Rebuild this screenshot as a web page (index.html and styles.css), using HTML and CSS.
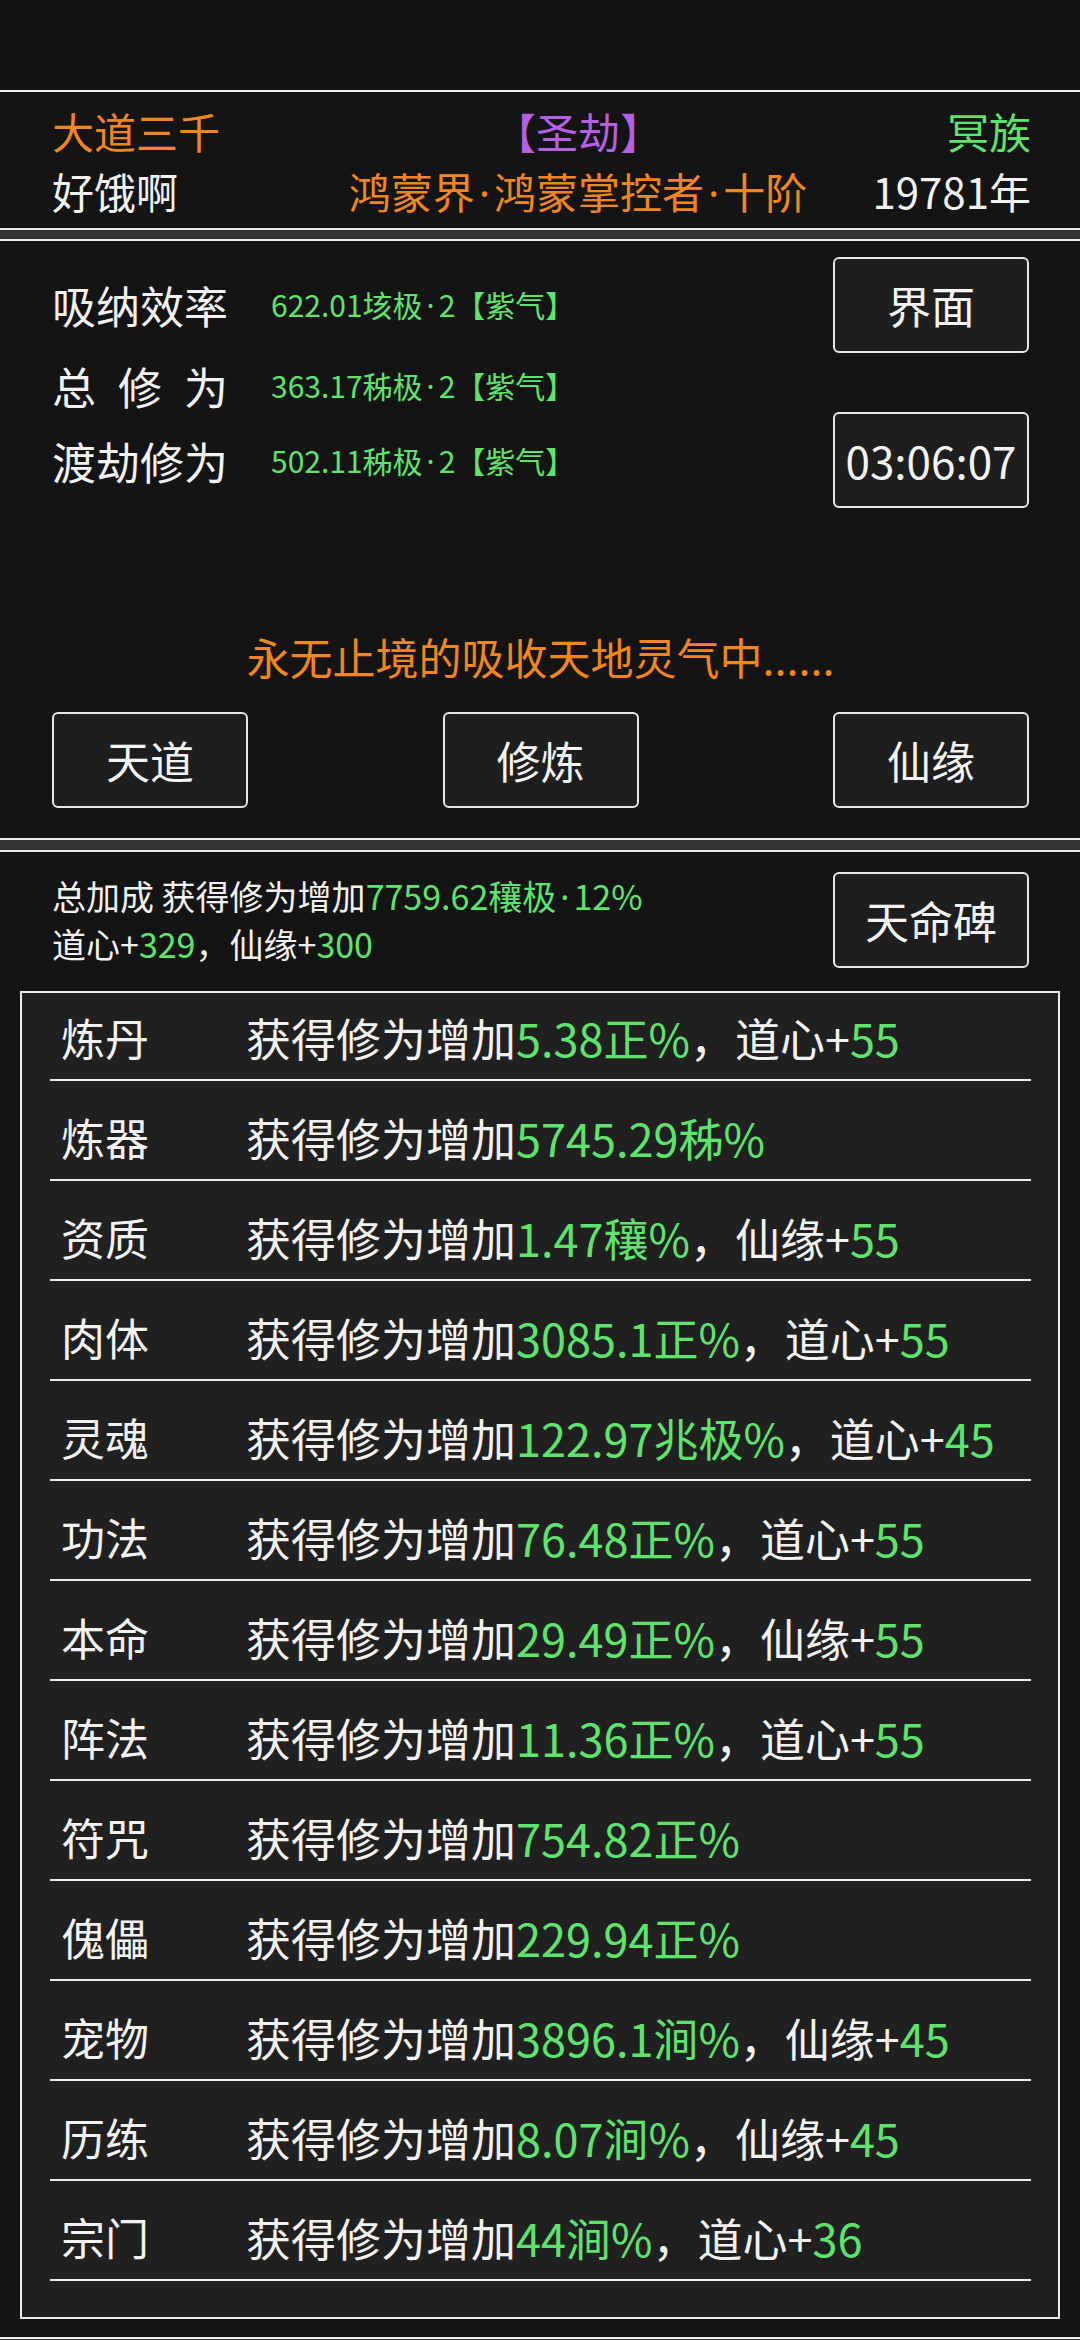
FILE: index.html
```html
<!DOCTYPE html>
<html lang="zh-CN">
<head>
<meta charset="utf-8">
<title>大道三千</title>
<link rel="stylesheet" href="styles.css">
</head>
<body>
<div class="app">
  <div class="topbar"></div>

  <section class="panel header">
    <div class="hcell left orange">大道三千</div>
    <div class="hcell mid purple">【圣劫】</div>
    <div class="hcell right green">冥族</div>
    <div class="hcell left">好饿啊</div>
    <div class="hcell mid orange">鸿蒙界<span class="dot">·</span>鸿蒙掌控者<span class="dot">·</span>十阶</div>
    <div class="hcell right">19781年</div>
  </section>

  <section class="panel cultivate">
    <div class="top-area">
      <div class="stats">
        <div class="stat s1"><span class="label">吸纳效率</span><span class="val green">622.01垓极<span class="dot">·</span>2【紫气】</span></div>
        <div class="stat s2"><span class="label spread"><i>总</i><i>修</i><i>为</i></span><span class="val green">363.17秭极<span class="dot">·</span>2【紫气】</span></div>
        <div class="stat s3"><span class="label">渡劫修为</span><span class="val green">502.11秭极<span class="dot">·</span>2【紫气】</span></div>
      </div>
      <div class="side-btns">
        <div class="btn">界面</div>
        <div class="btn">03:06:07</div>
      </div>
    </div>
    <div class="status orange">永无止境的吸收天地灵气中......</div>
    <div class="btn-row">
      <div class="btn">天道</div>
      <div class="btn">修炼</div>
      <div class="btn">仙缘</div>
    </div>
  </section>

  <section class="panel bonus">
    <div class="summary">
      <div class="sum-text">
        <div class="sum-line">总加成 获得修为增加<span class="green">7759.62穰极<span class="dot">·</span>12%</span></div>
        <div class="sum-line">道心+<span class="green">329</span>，仙缘+<span class="green">300</span></div>
      </div>
      <div class="btn">天命碑</div>
    </div>
    <div class="list">
      <div class="row"><span class="name">炼丹</span><span class="desc">获得修为增加<span class="green">5.38正%</span>，道心+<span class="green">55</span></span></div>
      <div class="row"><span class="name">炼器</span><span class="desc">获得修为增加<span class="green">5745.29秭%</span></span></div>
      <div class="row"><span class="name">资质</span><span class="desc">获得修为增加<span class="green">1.47穰%</span>，仙缘+<span class="green">55</span></span></div>
      <div class="row"><span class="name">肉体</span><span class="desc">获得修为增加<span class="green">3085.1正%</span>，道心+<span class="green">55</span></span></div>
      <div class="row"><span class="name">灵魂</span><span class="desc">获得修为增加<span class="green">122.97兆极%</span>，道心+<span class="green">45</span></span></div>
      <div class="row"><span class="name">功法</span><span class="desc">获得修为增加<span class="green">76.48正%</span>，道心+<span class="green">55</span></span></div>
      <div class="row"><span class="name">本命</span><span class="desc">获得修为增加<span class="green">29.49正%</span>，仙缘+<span class="green">55</span></span></div>
      <div class="row"><span class="name">阵法</span><span class="desc">获得修为增加<span class="green">11.36正%</span>，道心+<span class="green">55</span></span></div>
      <div class="row"><span class="name">符咒</span><span class="desc">获得修为增加<span class="green">754.82正%</span></span></div>
      <div class="row"><span class="name">傀儡</span><span class="desc">获得修为增加<span class="green">229.94正%</span></span></div>
      <div class="row"><span class="name">宠物</span><span class="desc">获得修为增加<span class="green">3896.1涧%</span>，仙缘+<span class="green">45</span></span></div>
      <div class="row"><span class="name">历练</span><span class="desc">获得修为增加<span class="green">8.07涧%</span>，仙缘+<span class="green">45</span></span></div>
      <div class="row"><span class="name">宗门</span><span class="desc">获得修为增加<span class="green">44涧%</span>，道心+<span class="green">36</span></span></div>
    </div>
  </section>
</div>
</body>
</html>
```

FILE: styles.css
```css
* { box-sizing: border-box; }

html, body {
  margin: 0;
  padding: 0;
  background: #111111;
}

body {
  width: 1080px;
  height: 2340px;
  overflow: hidden;
  font-family: "Noto Sans CJK SC", "Noto Sans", sans-serif;
  color: #f2f2f2;
}

.app {
  display: flex;
  flex-direction: column;
  background: #333333;
  min-height: 2340px;
}

.topbar {
  height: 90px;
  background: #111111;
}

.panel {
  background: #141414;
  border-top: 2px solid #ececec;
  border-bottom: 2px solid #ececec;
}

.panel + .panel { margin-top: 9px; }
.bonus { margin-top: 10px !important; }

.orange { color: #f0861c; }
.purple { color: #b55fe3; }
.green  { color: #5ee46c; }

.dot {
  font-family: "Noto Sans", "DejaVu Sans", sans-serif;
  padding: 0 4px;
}

/* Header */
.header {
  display: grid;
  grid-template-columns: 248px 556px 175px;
  grid-auto-rows: 60px;
  padding: 9px 49px 7px 52px;
  font-size: 42px;
  line-height: 60px;
}

.hcell { white-space: nowrap; }
.hcell.mid { text-align: center; }
.hcell.right { text-align: right; }

/* Cultivate panel */
.cultivate {
  padding: 16px 51px 30px 52px;
}

.top-area {
  display: flex;
  justify-content: space-between;
  align-items: flex-start;
}

.stats {
  display: flex;
  flex-direction: column;
}

.stat {
  display: flex;
  align-items: center;
  height: 50px;
}

.s1 { margin-top: 23px; }
.s2 { margin-top: 31px; }
.s3 { margin-top: 25px; }

.label {
  width: 176px;
  font-size: 44px;
  line-height: 50px;
  color: #f2f2f2;
}

.label.spread {
  display: flex;
  justify-content: space-between;
}

.label.spread i { font-style: normal; }

.val {
  margin-left: 43px;
  font-size: 30px;
  line-height: 50px;
}

.side-btns {
  display: flex;
  flex-direction: column;
  gap: 59px;
}

.btn {
  width: 196px;
  height: 96px;
  border: 2px solid #e6e6e6;
  border-radius: 6px;
  background: #1e1e1e;
  color: #f4f4f4;
  font-size: 44px;
  display: flex;
  align-items: center;
  justify-content: center;
  white-space: nowrap;
}

.status {
  margin-top: 118px;
  height: 60px;
  line-height: 60px;
  font-size: 43px;
  text-align: center;
}

.btn-row {
  margin-top: 26px;
  display: flex;
  justify-content: space-between;
}

/* Bonus panel */
.bonus {
  padding: 20px 0 18px 0;
}

.summary {
  display: flex;
  justify-content: space-between;
  align-items: flex-start;
  padding: 0 51px 0 52px;
}

.sum-text {
  font-size: 34px;
}

.sum-line {
  height: 48px;
  line-height: 48px;
  white-space: nowrap;
}

.list {
  margin: 23px 20px 0 20px;
  border: 2px solid #ececec;
  background: #202020;
  padding: 0 27px 36px 28px;
}

.row {
  display: flex;
  align-items: center;
  height: 88px;
  padding-top: 2px;
  border-bottom: 2px solid #ececec;
  font-size: 45px;
  white-space: nowrap;
}

.row + .row {
  margin-top: 12px;
}

.name {
  width: 196px;
  padding-left: 11px;
  font-size: 44px;
}
```
